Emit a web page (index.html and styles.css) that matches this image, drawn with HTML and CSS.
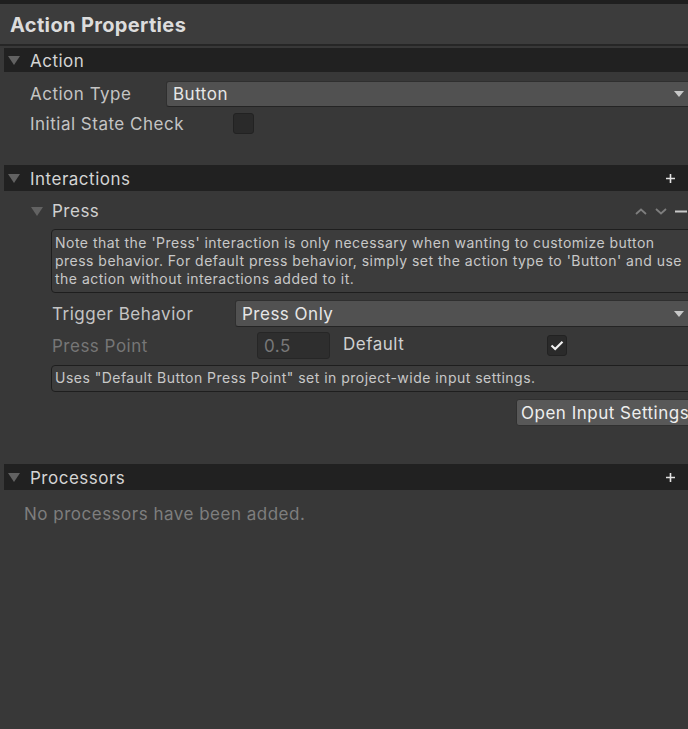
FILE: index.html
```html
<!DOCTYPE html>
<html>
<head>
<meta charset="utf-8">
<link rel="stylesheet" href="styles.css">
</head>
<body>
<div class="panel">
  <div class="titlebar"><h1 class="title">Action Properties</h1></div>
  <div class="content">
    <div class="section-header sh-action">
      <span class="tri"></span><span class="sh-label">Action</span>
    </div>
    <div class="row row-type">
      <span class="label lbl-type">Action Type</span>
      <div class="dropdown">Button<span class="arrow"></span></div>
    </div>
    <div class="row row-initial">
      <span class="label lbl-initial">Initial State Check</span>
      <span class="checkbox"></span>
    </div>

    <div class="section-header sh-inter">
      <span class="tri"></span><span class="sh-label">Interactions</span>
      <svg class="plus" width="9" height="9" viewBox="0 0 9 9"><path d="M4.5 0v9M0 4.5h9" stroke="#e2e2e2" stroke-width="1.6"/></svg>
    </div>
    <div class="interaction">
      <div class="int-header">
        <span class="tri"></span><span class="int-label">Press</span>
        <span class="controls">
          <svg width="12" height="7" viewBox="0 0 12 7"><path d="M1 6L6 1.5L11 6" fill="none" stroke="#7e7e7e" stroke-width="1.8"/></svg>
          <svg width="12" height="7" viewBox="0 0 12 7"><path d="M1 1L6 5.5L11 1" fill="none" stroke="#7e7e7e" stroke-width="1.8"/></svg>
          <svg width="12" height="3" viewBox="0 0 12 3"><path d="M0 1.5h12" stroke="#c8c8c8" stroke-width="2"/></svg>
        </span>
      </div>
      <div class="helpbox help-note">Note that the 'Press' interaction is only necessary when wanting to customize button press behavior. For default press behavior, simply set the action type to 'Button' and use the action without interactions added to it.</div>
      <div class="row row-trigger">
        <span class="label lbl-trigger">Trigger Behavior</span>
        <div class="dropdown">Press Only<span class="arrow"></span></div>
      </div>
      <div class="row row-point">
        <span class="label lbl-point disabled">Press Point</span>
        <span class="field">0.5</span>
        <span class="default-label">Default</span>
        <span class="checkbox checked">
          <svg width="14" height="11" viewBox="0 0 14 11"><path d="M1.5 5.5L5.2 9L12.5 1.8" fill="none" stroke="#f0f0f0" stroke-width="2.2"/></svg>
        </span>
      </div>
      <div class="helpbox help-uses">Uses "Default Button Press Point" set in project-wide input settings.</div>
      <div class="btn-row"><button class="btn">Open Input Settings</button></div>
    </div>

    <div class="section-header sh-proc">
      <span class="tri"></span><span class="sh-label">Processors</span>
      <svg class="plus" width="9" height="9" viewBox="0 0 9 9"><path d="M4.5 0v9M0 4.5h9" stroke="#e2e2e2" stroke-width="1.6"/></svg>
    </div>
    <div class="empty">No processors have been added.</div>
  </div>
</div>
</body>
</html>
```

FILE: styles.css
```css
* { box-sizing: border-box; }
html, body {
  margin: 0;
  padding: 0;
  background: #383838;
  overflow: hidden;
}
body {
  font-family: Inter, "Noto Sans", sans-serif;
  color: #d2d2d2;
  font-size: 17px;
  letter-spacing: 0.5px;
  width: 688px;
  height: 729px;
}
.panel { width: 688px; }
.titlebar {
  border-top: 4px solid #1f1f1f;
  height: 46px;
  background: #3c3c3c;
  border-bottom: 2px solid #262626;
  display: flex;
  align-items: center;
  padding-left: 10px;
}
.title {
  margin: 0;
  font-size: 20px;
  font-weight: 700;
  letter-spacing: 0.35px;
  color: #dcdcdc;
  line-height: 24px;
  padding-top: 2px;
}
.content { padding-top: 2px; }

.section-header {
  margin-left: 4px;
  background: #212121;
  display: flex;
  align-items: center;
  height: 24px;
  padding-left: 4px;
  padding-right: 13px;
}
.sh-inter { margin-top: 31px; height: 26px; }
.sh-proc { margin-top: 38px; height: 26px; }
.sh-label {
  margin-left: 10px;
  color: #d4d4d4;
  line-height: 24px;
  padding-top: 2px;
  flex: 1;
}
.tri {
  width: 0;
  height: 0;
  border-left: 6px solid transparent;
  border-right: 6px solid transparent;
  border-top: 9px solid #626262;
}
.plus { display: block; }

.row {
  display: flex;
  align-items: center;
  height: 27px;
}
.row-type { margin-top: 9px; padding-left: 30px; height: 26px; }
.row-initial { margin-top: 6px; padding-left: 30px; height: 21px; }
.label { flex: none; color: #c4c4c4; }
.lbl-type { width: 136px; }
.lbl-initial { width: 203px; }
.lbl-trigger { width: 183px; }
.lbl-point { width: 205px; }
.disabled { color: #767676; }

.dropdown {
  flex: 1;
  height: 100%;
  margin-right: -4px;
  background: #515151;
  border: 1px solid #2f2f2f;
  border-bottom-color: #242424;
  border-radius: 3px;
  display: flex;
  align-items: center;
  padding-left: 6px;
  color: #e6e6e6;
  position: relative;
}
.arrow {
  position: absolute;
  right: 7px;
  top: 50%;
  margin-top: -3px;
  width: 0;
  height: 0;
  border-left: 5.5px solid transparent;
  border-right: 5.5px solid transparent;
  border-top: 6px solid #c8c8c8;
}
.checkbox {
  flex: none;
  width: 21px;
  height: 21px;
  background: #2a2a2a;
  border: 1px solid #222;
  border-radius: 3px;
  display: flex;
  align-items: center;
  justify-content: center;
}
.checkbox.checked { width: 20px; height: 21px; margin-left: 0; }

.interaction { padding-left: 51px; }
.int-header {
  margin-top: 8px;
  height: 24px;
  display: flex;
  align-items: center;
  margin-left: -20px;
}
.int-label { margin-left: 9px; flex: 1; color: #d0d0d0; }
.controls {
  display: flex;
  align-items: center;
  gap: 8px;
  padding-right: 1px;
}
.controls svg { display: block; }

.helpbox {
  margin-top: 6px;
  margin-right: -4px;
  background: #3c3c3c;
  border: 1px solid #1e1e1e;
  border-radius: 4px;
  font-size: 14px;
  letter-spacing: 0.48px;
  line-height: 18px;
  color: #c8c8c8;
  padding: 4px 0 4px 3px;
}
.help-uses { padding-top: 3px; padding-bottom: 4px; }

.row-trigger { margin-top: 7px; }
.row-point { margin-top: 5px; }
.row-trigger .label, .row-point .label { margin-left: 1px; }
.field {
  width: 73px;
  height: 27px;
  background: #2e2e2e;
  border: 1px solid #262626;
  border-radius: 3px;
  color: #787878;
  padding-left: 6px;
  display: flex;
  align-items: center;
}
.default-label { margin-left: 13px; width: 204px; color: #d0d0d0; padding-bottom: 4px; }

.btn-row {
  margin-top: 7px;
  display: flex;
  justify-content: flex-end;
  margin-right: -4px;
}
.btn {
  font-family: inherit;
  font-size: 17px;
  letter-spacing: 0.5px;
  color: #eeeeee;
  background: #585858;
  border: 1px solid #303030;
  border-radius: 3px;
  height: 27px;
  padding: 0 0 0 4px;
  width: 176px;
  text-align: left;
  line-height: 24px;
}

.empty {
  margin-top: 12px;
  padding-left: 24px;
  line-height: 24px;
  color: #7e7e7e;
}
```
